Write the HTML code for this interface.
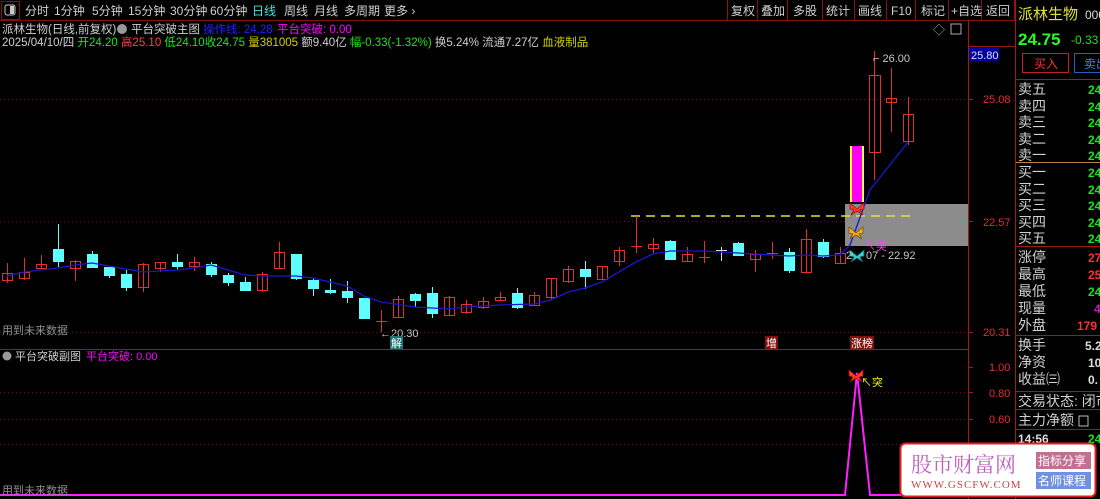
<!DOCTYPE html>
<html><head><meta charset="utf-8"><style>
body{margin:0;background:#000;width:1100px;height:499px;overflow:hidden}
svg{display:block;font-family:"Liberation Sans","Noto Sans CJK SC",sans-serif}
</style></head><body>
<svg width="1100" height="499" viewBox="0 0 1100 499" xmlns="http://www.w3.org/2000/svg">
<defs>
<path id="bf" d="M0,1 L-7,-5 L-7,1 L-3,2 L-6,7 L0,3 L6,7 L3,2 L7,1 L7,-5 Z"/>
</defs>
<rect width="1100" height="499" fill="#000"/>
<!-- toolbar -->
<g stroke="#8a1010" fill="none">
<line x1="0" y1="20.5" x2="1015" y2="20.5"/>
<rect x="1.5" y="1.5" width="18" height="18"/>
<line x1="727.5" y1="0" x2="727.5" y2="20"/><line x1="757.5" y1="0" x2="757.5" y2="20"/><line x1="787.5" y1="0" x2="787.5" y2="20"/><line x1="822.5" y1="0" x2="822.5" y2="20"/><line x1="854.5" y1="0" x2="854.5" y2="20"/><line x1="886.5" y1="0" x2="886.5" y2="20"/><line x1="915.5" y1="0" x2="915.5" y2="20"/><line x1="948.5" y1="0" x2="948.5" y2="20"/><line x1="981.5" y1="0" x2="981.5" y2="20"/><line x1="1014.5" y1="0" x2="1014.5" y2="20"/>
</g>
<rect x="5" y="5" width="10" height="10" rx="2" fill="none" stroke="#ccc"/><rect x="10" y="6" width="4" height="8" fill="#ccc"/>
<g fill="#d0d0d0" font-size="12">
<text x="25" y="15">分时</text><text x="54" y="15">1分钟</text><text x="92" y="15">5分钟</text><text x="128" y="15">15分钟</text><text x="170" y="15">30分钟</text><text x="210" y="15">60分钟</text>
<text x="252" y="15" fill="#50e0e0">日线</text><text x="284" y="15">周线</text><text x="314" y="15">月线</text><text x="344" y="15">多周期</text><text x="384" y="15">更多 ›</text>
<text x="731" y="15">复权</text><text x="761" y="15">叠加</text><text x="793" y="15">多股</text><text x="826" y="15">统计</text><text x="858" y="15">画线</text><text x="891" y="15">F10</text><text x="921" y="15">标记</text><text x="951" y="15">+自选</text><text x="986" y="15">返回</text>
</g>
<!-- info lines -->
<g font-size="11.5">
<text x="2" y="33" fill="#d0d0d0">派林生物(日线,前复权)</text>
<circle cx="122" cy="29" r="5" fill="#999"/>
<text x="131" y="33" fill="#d0d0d0">平台突破主图</text>
<text x="203" y="33" fill="#2020ff">操作线: 24.28</text>
<text x="277" y="33" fill="#ff00ff">平台突破: 0.00</text>
<text x="2" y="46" fill="#d0d0d0">2025/04/10/四 <tspan fill="#20e020">开24.20</tspan> <tspan fill="#ff4040">高25.10</tspan> <tspan fill="#20e020">低24.10</tspan><tspan fill="#20e020">收24.75</tspan> <tspan fill="#d0d000">量</tspan><tspan fill="#d0d000">381005</tspan> 额9.40亿 <tspan fill="#20e020">幅-0.33(-1.32%)</tspan> 换5.24% 流通7.27亿 <tspan fill="#d0d000">血液制品</tspan></text>
</g>
<text x="933" y="34" fill="#aaa" font-size="12">◇</text><rect x="951" y="24" width="10" height="10" fill="none" stroke="#aaa"/>
<!-- axes -->
<g stroke="#a01818"><line x1="968.5" y1="20" x2="968.5" y2="499"/><line x1="1015.5" y1="0" x2="1015.5" y2="499"/><line x1="0" y1="349.5" x2="968" y2="349.5"/><line x1="968" y1="46.5" x2="1015" y2="46.5"/></g>
<rect x="969" y="48" width="30" height="13" fill="#0000a0"/><text x="971" y="59" fill="#e0e0ff" font-size="11">25.80</text>
<g stroke="#6a1010" stroke-dasharray="1 3"><line x1="0" y1="99.5" x2="968" y2="99.5"/><line x1="0" y1="221.5" x2="968" y2="221.5"/><line x1="0" y1="332.5" x2="968" y2="332.5"/><line x1="0" y1="392.5" x2="968" y2="392.5"/><line x1="0" y1="419.5" x2="968" y2="419.5"/><line x1="0" y1="444.5" x2="968" y2="444.5"/></g>
<g fill="#e03030" font-size="11"><text x="983" y="103">25.08</text><text x="983" y="226">22.57</text><text x="983" y="336">20.31</text><text x="989" y="371">1.00</text><text x="989" y="397">0.80</text><text x="989" y="423">0.60</text></g>
<g stroke="#a01818"><line x1="968" y1="99.5" x2="973" y2="99.5"/><line x1="968" y1="221.5" x2="973" y2="221.5"/><line x1="968" y1="332.5" x2="973" y2="332.5"/><line x1="968" y1="367.5" x2="973" y2="367.5"/><line x1="968" y1="392.5" x2="973" y2="392.5"/><line x1="968" y1="419.5" x2="973" y2="419.5"/></g>
<!-- gray box -->
<rect x="845" y="204" width="123" height="42" fill="#8c8c8c"/>
<line x1="631" y1="216" x2="915" y2="216" stroke="#e0e040" stroke-width="1.5" stroke-dasharray="9 6"/>
<!-- candles -->
<g stroke-width="1">
<g stroke="#e03030" fill="none">
<line x1="7.5" y1="263" x2="7.5" y2="283"/><rect x="2.5" y="273.5" width="10" height="7"/>
<line x1="24.5" y1="258" x2="24.5" y2="280"/><rect x="19.5" y="272.5" width="10" height="6"/>
<line x1="41.5" y1="255" x2="41.5" y2="268"/><rect x="36.5" y="264.5" width="10" height="4"/>
<line x1="75.5" y1="260" x2="75.5" y2="281"/><rect x="70.5" y="261.5" width="10" height="7"/>
<line x1="143.5" y1="263" x2="143.5" y2="292"/><rect x="138.5" y="264.5" width="10" height="23"/>
<line x1="160.5" y1="262" x2="160.5" y2="272"/><rect x="155.5" y="262.5" width="10" height="6"/>
<line x1="194.5" y1="257" x2="194.5" y2="271"/><rect x="189.5" y="262.5" width="10" height="4"/>
<line x1="262.5" y1="272" x2="262.5" y2="292"/><rect x="257.5" y="274.5" width="10" height="16"/>
<line x1="279.5" y1="242" x2="279.5" y2="268"/><rect x="274.5" y="252.5" width="10" height="16"/>
<line x1="381.5" y1="310" x2="381.5" y2="332"/><line x1="376" y1="321.5" x2="387" y2="321.5"/>
<line x1="398.5" y1="296" x2="398.5" y2="317"/><rect x="393.5" y="299.5" width="10" height="18"/>
<line x1="449.5" y1="296" x2="449.5" y2="316"/><rect x="444.5" y="297.5" width="10" height="18"/>
<line x1="466.5" y1="300" x2="466.5" y2="314"/><rect x="461.5" y="304.5" width="10" height="8"/>
<line x1="483.5" y1="297" x2="483.5" y2="309"/><rect x="478.5" y="301.5" width="10" height="6"/>
<line x1="500.5" y1="292" x2="500.5" y2="300"/><rect x="495.5" y="297.5" width="10" height="3"/>
<line x1="534.5" y1="292" x2="534.5" y2="306"/><rect x="529.5" y="295.5" width="10" height="10"/>
<line x1="551.5" y1="278" x2="551.5" y2="300"/><rect x="546.5" y="278.5" width="10" height="19"/>
<line x1="568.5" y1="266" x2="568.5" y2="283"/><rect x="563.5" y="269.5" width="10" height="12"/>
<line x1="602.5" y1="266" x2="602.5" y2="279"/><rect x="597.5" y="266.5" width="10" height="13"/>
<line x1="619.5" y1="247" x2="619.5" y2="266"/><rect x="614.5" y="250.5" width="10" height="11"/>
<line x1="636.5" y1="216" x2="636.5" y2="253"/><line x1="631" y1="246.5" x2="642" y2="246.5"/>
<line x1="653.5" y1="238" x2="653.5" y2="253"/><rect x="648.5" y="244.5" width="10" height="4"/>
<line x1="687.5" y1="247" x2="687.5" y2="262"/><rect x="682.5" y="254.5" width="10" height="7"/>
<line x1="704.5" y1="241" x2="704.5" y2="263"/><line x1="699" y1="257.5" x2="710" y2="257.5"/>
<line x1="755.5" y1="250" x2="755.5" y2="272"/><rect x="750.5" y="254.5" width="10" height="5"/>
<line x1="772.5" y1="242" x2="772.5" y2="259"/><line x1="767" y1="253.5" x2="778" y2="253.5"/>
<line x1="806.5" y1="229" x2="806.5" y2="272"/><rect x="801.5" y="239.5" width="10" height="33"/>
<line x1="840.5" y1="247" x2="840.5" y2="263"/><rect x="835.5" y="253.5" width="10" height="10"/>
<line x1="874.5" y1="51" x2="874.5" y2="180"/><rect x="869.5" y="75.5" width="11" height="77"/>
<line x1="891.5" y1="68" x2="891.5" y2="132"/><rect x="886.5" y="98.5" width="10" height="4"/>
<line x1="908.5" y1="97" x2="908.5" y2="145"/><rect x="903.5" y="114.5" width="10" height="27"/>
</g>
<line x1="721.5" y1="247" x2="721.5" y2="261" stroke="#ddd"/><line x1="716" y1="250.5" x2="727" y2="250.5" stroke="#ddd"/>
<g fill="#60ffff" stroke="#60ffff">
<line x1="58.5" y1="224" x2="58.5" y2="267"/><rect x="53.5" y="249.5" width="10" height="12"/>
<line x1="92.5" y1="251" x2="92.5" y2="268"/><rect x="87.5" y="254.5" width="10" height="13"/>
<line x1="109.5" y1="267" x2="109.5" y2="278"/><rect x="104.5" y="267.5" width="10" height="8"/>
<line x1="126.5" y1="270" x2="126.5" y2="291"/><rect x="121.5" y="274.5" width="10" height="13"/>
<line x1="177.5" y1="254" x2="177.5" y2="270"/><rect x="172.5" y="262.5" width="10" height="4"/>
<line x1="211.5" y1="262" x2="211.5" y2="277"/><rect x="206.5" y="264.5" width="10" height="10"/>
<line x1="228.5" y1="273" x2="228.5" y2="286"/><rect x="223.5" y="275.5" width="10" height="7"/>
<line x1="245.5" y1="277" x2="245.5" y2="290"/><rect x="240.5" y="282.5" width="10" height="8"/>
<line x1="296.5" y1="254" x2="296.5" y2="280"/><rect x="291.5" y="254.5" width="10" height="24"/>
<line x1="313.5" y1="278" x2="313.5" y2="296"/><rect x="308.5" y="280.5" width="10" height="8"/>
<line x1="330.5" y1="279" x2="330.5" y2="294"/><rect x="325.5" y="290.5" width="10" height="2"/>
<line x1="347.5" y1="281" x2="347.5" y2="303"/><rect x="342.5" y="291.5" width="10" height="6"/>
<line x1="364.5" y1="298" x2="364.5" y2="319"/><rect x="359.5" y="298.5" width="10" height="20"/>
<line x1="415.5" y1="293" x2="415.5" y2="307"/><rect x="410.5" y="294.5" width="10" height="6"/>
<line x1="432.5" y1="287" x2="432.5" y2="318"/><rect x="427.5" y="293.5" width="10" height="20"/>
<line x1="517.5" y1="288" x2="517.5" y2="309"/><rect x="512.5" y="293.5" width="10" height="14"/>
<line x1="585.5" y1="261" x2="585.5" y2="289"/><rect x="580.5" y="269.5" width="10" height="7"/>
<line x1="670.5" y1="240" x2="670.5" y2="260"/><rect x="665.5" y="241.5" width="10" height="18"/>
<line x1="738.5" y1="242" x2="738.5" y2="256"/><rect x="733.5" y="243.5" width="10" height="12"/>
<line x1="789.5" y1="248" x2="789.5" y2="273"/><rect x="784.5" y="252.5" width="10" height="18"/>
<line x1="823.5" y1="239" x2="823.5" y2="258"/><rect x="818.5" y="242.5" width="10" height="14"/>
</g>
</g>
<rect x="850" y="146" width="14" height="56" fill="#ffff40"/><rect x="852" y="146" width="10" height="56" fill="#ff00ff"/>
<polyline fill="none" stroke="#1818d0" stroke-width="1.3" points="7,276 24,272 58,268 75,265 92,263 109,266 143,272 177,270 194,268 211,265 245,275 262,276 296,276 313,278 347,286 364,296 381,302 415,307 449,309 466,307 500,305 534,304 551,300 568,292 585,288 602,282 619,272 636,262 653,254 670,251 704,251 721,252 738,253 755,254 789,256 806,255 823,256 840,255 850,245 870,190 908,142"/>
<!-- butterflies -->
<use href="#bf" x="857" y="208" fill="#ff3a2a" stroke="#a01010" stroke-width="0.8"/>
<use href="#bf" x="856" y="232" fill="#f0b020" stroke="#805000" stroke-width="0.8"/>
<use href="#bf" x="857" y="255" fill="#30d8d8" stroke="#106060" stroke-width="0.8"/>
<text x="865" y="250" fill="#ff40ff" font-size="11">↖突</text>
<g fill="#c8c8c8" font-size="11"><text x="846" y="259">2</text><text x="866" y="259">07 - 22.92</text><text x="873" y="62">⌐ 26.00</text><text x="380" y="337">←20.30</text></g>
<g font-size="11"><rect x="390" y="336" width="13" height="13" fill="#207070"/><text x="391" y="347" fill="#fff">解</text>
<rect x="765" y="336" width="13" height="13" fill="#801010"/><text x="766" y="347" fill="#fff">增</text>
<rect x="850" y="336" width="24" height="13" fill="#801010"/><text x="851" y="347" fill="#fff">涨榜</text></g>
<text x="2" y="334" fill="#909090" font-size="11">用到未来数据</text>
<!-- sub chart -->
<circle cx="7" cy="356" r="4.5" fill="#999"/>
<text x="15" y="360" fill="#d0d0d0" font-size="11">平台突破副图</text>
<text x="86" y="360" fill="#ff00ff" font-size="11">平台突破: 0.00</text>
<polyline fill="none" stroke="#ff20ff" stroke-width="2" points="0,495 845,495 857,373 870,495 968,495"/>
<use href="#bf" x="856" y="375" fill="#ff4020" stroke="#a01010" stroke-width="0.8"/>
<text x="861" y="386" fill="#f0f020" font-size="11">↖突</text>
<text x="2" y="494" fill="#909090" font-size="11">用到未来数据</text>
<!-- right panel -->
<text x="1018" y="19" fill="#e0e040" font-size="15">派林生物</text><text x="1085" y="19" fill="#ddd" font-size="12">000</text>
<text x="1018" y="45" fill="#20ff20" font-size="17" font-weight="bold">24.75</text><text x="1071" y="44" fill="#20e020" font-size="12">-0.33</text>
<rect x="1022.5" y="53.5" width="46" height="19" fill="none" stroke="#c02020"/><text x="1034" y="68" fill="#ff3030" font-size="12">买入</text>
<rect x="1074.5" y="53.5" width="30" height="19" fill="none" stroke="#2060c0"/><text x="1084" y="68" fill="#4080ff" font-size="12">卖出</text>
<g stroke="#a01818"><line x1="1016" y1="79.5" x2="1100" y2="79.5"/><line x1="1016" y1="246.5" x2="1100" y2="246.5"/><line x1="1016" y1="335.5" x2="1100" y2="335.5"/><line x1="1016" y1="391.5" x2="1100" y2="391.5"/><line x1="1016" y1="409.5" x2="1100" y2="409.5"/><line x1="1016" y1="429.5" x2="1100" y2="429.5"/></g>
<line x1="1016" y1="162.5" x2="1100" y2="162.5" stroke="#c08040"/>
<g fill="#d0d0d0" font-size="14">
<text x="1018" y="94">卖五</text><text x="1018" y="111">卖四</text><text x="1018" y="127">卖三</text><text x="1018" y="144">卖二</text><text x="1018" y="160">卖一</text>
<text x="1018" y="177">买一</text><text x="1018" y="194">买二</text><text x="1018" y="210">买三</text><text x="1018" y="227">买四</text><text x="1018" y="243">买五</text>
<text x="1018" y="262">涨停</text><text x="1018" y="279">最高</text><text x="1018" y="296">最低</text><text x="1018" y="313">现量</text><text x="1018" y="330">外盘</text>
<text x="1018" y="350">换手</text><text x="1018" y="367">净资</text><text x="1018" y="384">收益㈢</text>
<text x="1018" y="406">交易状态: 闭市</text><text x="1018" y="425">主力净额</text>
</g>
<g font-size="12" font-weight="bold">
<g fill="#20e020"><text x="1088" y="94">24</text><text x="1088" y="111">24</text><text x="1088" y="127">24</text><text x="1088" y="144">24</text><text x="1088" y="160">24</text><text x="1088" y="177">24</text><text x="1088" y="194">24</text><text x="1088" y="210">24</text><text x="1088" y="227">24</text><text x="1088" y="243">24</text><text x="1088" y="296">24</text></g>
<text x="1088" y="262" fill="#ff3030">27</text><text x="1088" y="279" fill="#ff3030">25</text><text x="1094" y="313" fill="#c020c0">4</text><text x="1077" y="330" fill="#ff3030">179</text>
<g fill="#ddd"><text x="1085" y="350">5.2</text><text x="1088" y="367">10</text><text x="1088" y="384">0.</text></g>
<text x="1018" y="443" fill="#ddd">14:56</text><text x="1088" y="443" fill="#20e020">24</text>
</g>
<rect x="1079" y="416" width="9" height="10" fill="none" stroke="#bbb"/>
<!-- watermark -->
<rect x="900.5" y="443.5" width="195" height="53" rx="5" fill="#fff" stroke="#e02020" stroke-width="2"/>
<text x="911" y="472" fill="#c060c0" font-size="21" font-family="Liberation Serif,Noto Serif CJK SC,serif">股市财富网</text>
<text x="911" y="488" fill="#d04040" font-size="11" font-family="Liberation Serif,serif" letter-spacing="1">WWW.GSCFW.COM</text>
<rect x="1036" y="452" width="55" height="17" fill="#c07090"/><text x="1038" y="465" fill="#fff" font-size="12">指标分享</text>
<rect x="1036" y="472" width="55" height="17" fill="#7090e0"/><text x="1038" y="485" fill="#fff" font-size="12">名师课程</text>
</svg>
</body></html>
